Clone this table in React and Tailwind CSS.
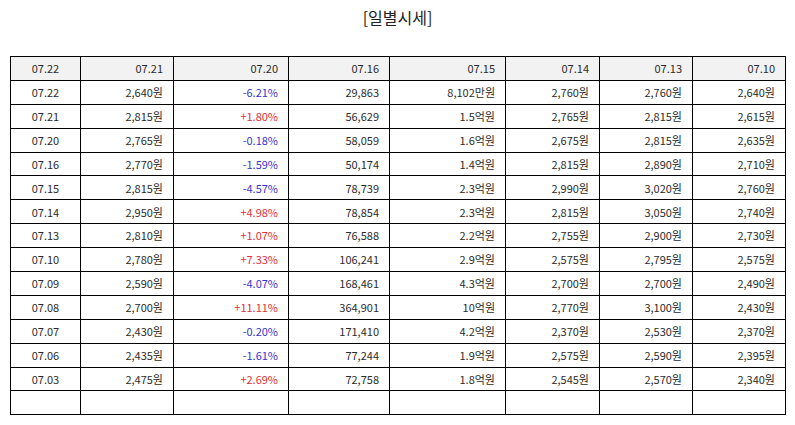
const headers = ["07.22", "07.21", "07.20", "07.16", "07.15", "07.14", "07.13", "07.10"];

const rows = [
  ["07.22", "2,640원", "-6.21%", "29,863", "8,102만원", "2,760원", "2,760원", "2,640원"],
  ["07.21", "2,815원", "+1.80%", "56,629", "1.5억원", "2,765원", "2,815원", "2,615원"],
  ["07.20", "2,765원", "-0.18%", "58,059", "1.6억원", "2,675원", "2,815원", "2,635원"],
  ["07.16", "2,770원", "-1.59%", "50,174", "1.4억원", "2,815원", "2,890원", "2,710원"],
  ["07.15", "2,815원", "-4.57%", "78,739", "2.3억원", "2,990원", "3,020원", "2,760원"],
  ["07.14", "2,950원", "+4.98%", "78,854", "2.3억원", "2,815원", "3,050원", "2,740원"],
  ["07.13", "2,810원", "+1.07%", "76,588", "2.2억원", "2,755원", "2,900원", "2,730원"],
  ["07.10", "2,780원", "+7.33%", "106,241", "2.9억원", "2,575원", "2,795원", "2,575원"],
  ["07.09", "2,590원", "-4.07%", "168,461", "4.3억원", "2,700원", "2,700원", "2,490원"],
  ["07.08", "2,700원", "+11.11%", "364,901", "10억원", "2,770원", "3,100원", "2,430원"],
  ["07.07", "2,430원", "-0.20%", "171,410", "4.2억원", "2,370원", "2,530원", "2,370원"],
  ["07.06", "2,435원", "-1.61%", "77,244", "1.9억원", "2,575원", "2,590원", "2,395원"],
  ["07.03", "2,475원", "+2.69%", "72,758", "1.8억원", "2,545원", "2,570원", "2,340원"],
];

const widths = ["w-[70px]", "w-[93px]", "w-[115px]", "w-[101px]", "w-[116px]", "w-[94px]", "w-[93px]", "w-[93px]"];

const App = () => {
  return (
    <div
      className="w-[795px] h-[425px] bg-white text-[#2b2b2b]"
      style={{ fontFamily: '"Noto Sans CJK KR", "Noto Sans", sans-serif' }}
    >
      <h1 className="text-center text-[16px] text-[#222] pt-[6px] h-[56px] leading-[22px]">
        [일별시세]
      </h1>

      <table className="ml-[10px] w-[776px] border-collapse table-fixed text-[11px]">
        <colgroup>
          {widths.map((w, i) => (
            <col key={i} className={w} />
          ))}
        </colgroup>
        <thead>
          <tr className="h-[23.9px] bg-[#f2f2f2]">
            {headers.map((h, i) => (
              <th
                key={i}
                className={`border border-black font-normal px-[10px] ${
                  i === 0 ? "text-center" : "text-right"
                }`}
              >
                {h}
              </th>
            ))}
          </tr>
        </thead>
        <tbody>
          {rows.map((row, r) => (
            <tr key={r} className="h-[23.9px]">
              {row.map((cell, i) => (
                <td
                  key={i}
                  className={`border border-black px-[10px] ${
                    i === 0 ? "text-center" : "text-right"
                  } ${
                    i === 2
                      ? cell.startsWith("+")
                        ? "text-[#e4303a]"
                        : "text-[#3535cc]"
                      : ""
                  }`}
                >
                  {cell}
                </td>
              ))}
            </tr>
          ))}
          <tr className="h-[23.9px]">
            {headers.map((_, i) => (
              <td key={i} className="border border-black"></td>
            ))}
          </tr>
        </tbody>
      </table>
    </div>
  );
};

export default App;
